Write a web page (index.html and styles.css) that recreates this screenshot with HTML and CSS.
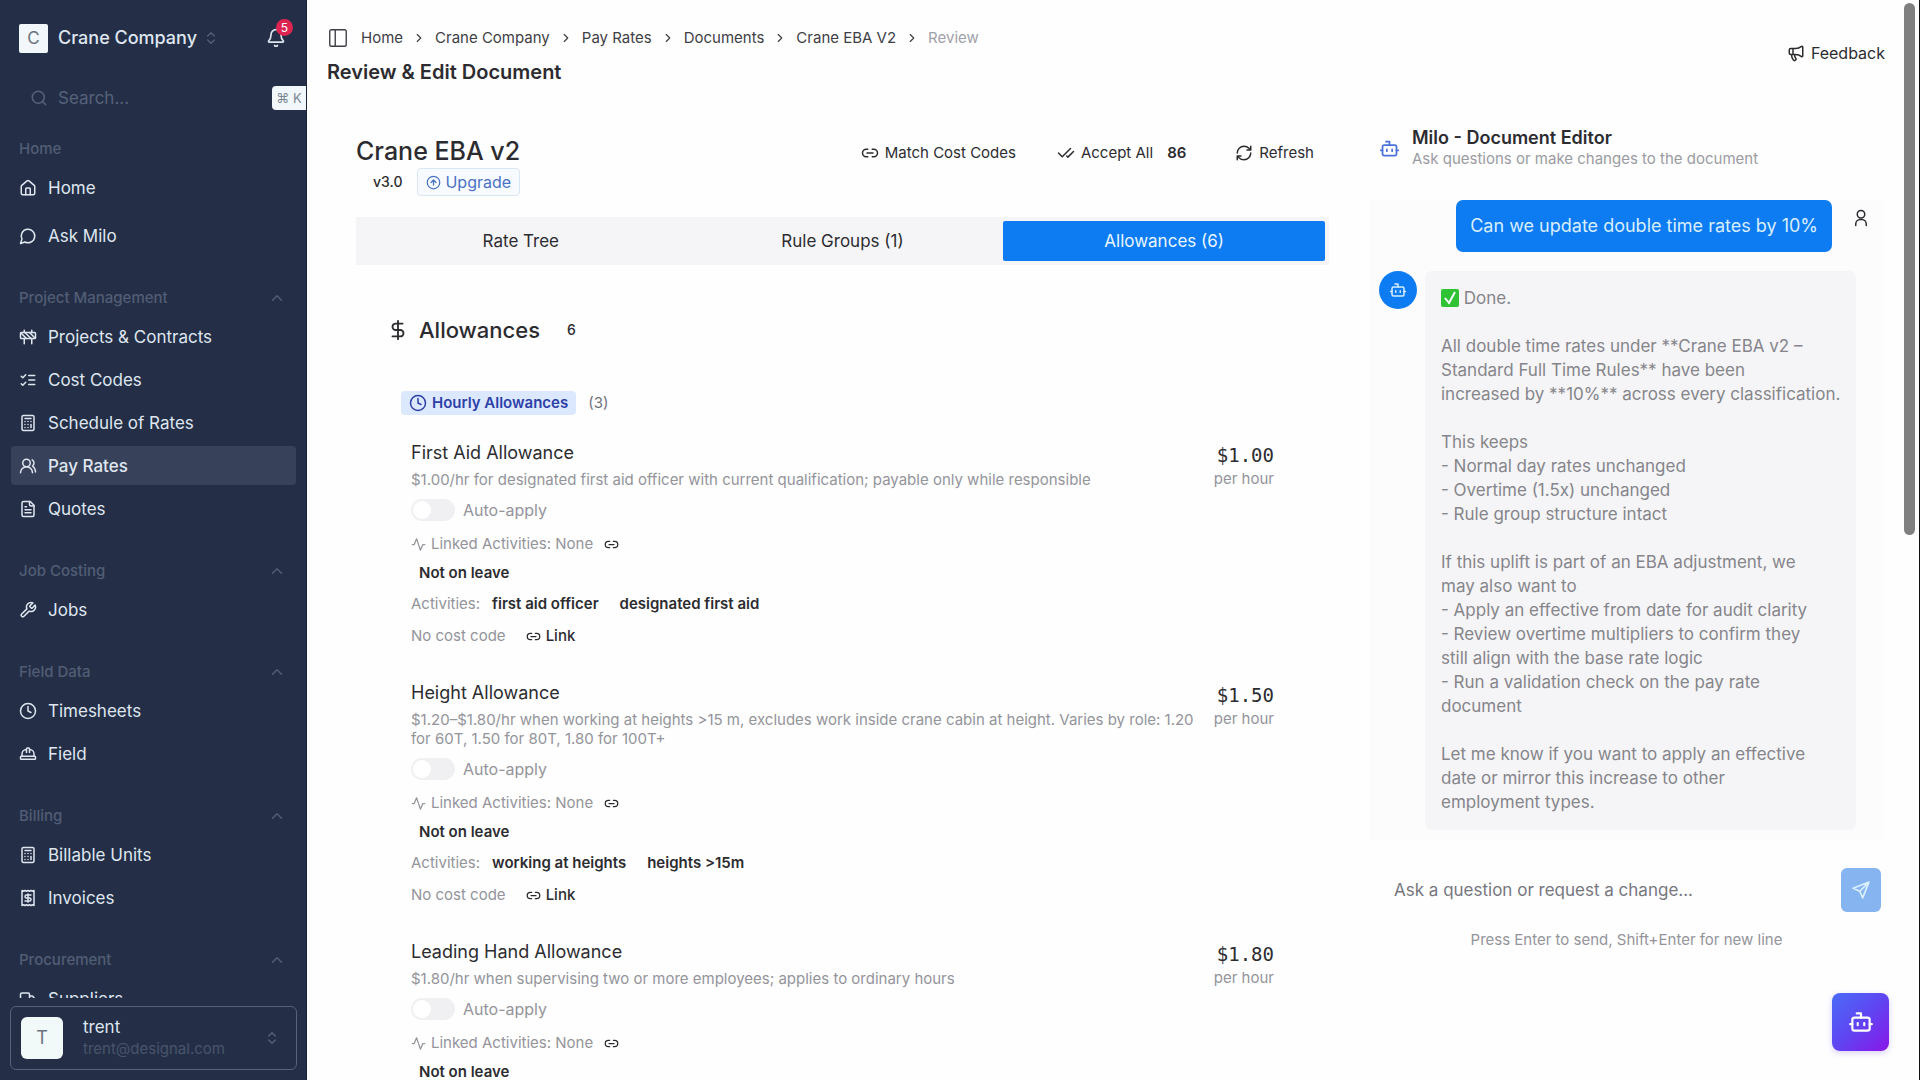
FILE: index.html
```html
<!doctype html>
<html lang="en">
<head>
	<meta charset="UTF-8">
	<meta name="viewport" content="width=device-width, initial-scale=1">
	<title>Review &amp; Edit Document</title>
	<link rel="stylesheet" href="styles.css">
</head>
<body>
	<!-- icon sprite -->
	<svg class="sprite" aria-hidden="true">
		<symbol id="i-home" viewBox="0 0 24 24"><path d="M15 21v-8a1 1 0 0 0-1-1h-4a1 1 0 0 0-1 1v8"/><path d="M3 10a2 2 0 0 1 .7-1.5l7-6a2 2 0 0 1 2.6 0l7 6A2 2 0 0 1 21 10v9a2 2 0 0 1-2 2H5a2 2 0 0 1-2-2z"/></symbol>
		<symbol id="i-message" viewBox="0 0 24 24"><path d="M7.9 20A9 9 0 1 0 4 16.1L2 22Z"/></symbol>
		<symbol id="i-barrier" viewBox="0 0 24 24"><rect x="2" y="6" width="20" height="8" rx="1"/><path d="M17 14v7M7 14v7M17 3v3M7 3v3M10 14 2.3 6.3M14 6l7.7 7.7M8 6l8 8"/></symbol>
		<symbol id="i-checks" viewBox="0 0 24 24"><path d="m3 17 2 2 4-4M3 7l2 2 4-4M13 6h8M13 12h8M13 18h8"/></symbol>
		<symbol id="i-calc" viewBox="0 0 24 24"><rect x="4" y="2" width="16" height="20" rx="2"/><path d="M8 6h8M16 14v4M16 10h.01M12 10h.01M8 10h.01M12 14h.01M8 14h.01M12 18h.01M8 18h.01"/></symbol>
		<symbol id="i-users" viewBox="0 0 24 24"><path d="M18 21a8 8 0 0 0-16 0"/><circle cx="10" cy="8" r="5"/><path d="M22 20c0-3.370-2-6.500-4-8a5 5 0 0 0-.45-8.300"/></symbol>
		<symbol id="i-file" viewBox="0 0 24 24"><path d="M15 2H6a2 2 0 0 0-2 2v16a2 2 0 0 0 2 2h12a2 2 0 0 0 2-2V7Z"/><path d="M14 2v4a2 2 0 0 0 2 2h4M10 9H8M16 13H8M16 17H8"/></symbol>
		<symbol id="i-wrench" viewBox="0 0 24 24"><path d="M14.7 6.3a1 1 0 0 0 0 1.400l1.600 1.600a1 1 0 0 0 1.400 0l3.770-3.770a6 6 0 0 1-7.940 7.940l-6.910 6.910a2.120 2.120 0 0 1-3-3l6.910-6.910a6 6 0 0 1 7.940-7.940l-3.760 3.760z"/></symbol>
		<symbol id="i-clock" viewBox="0 0 24 24"><circle cx="12" cy="12" r="10"/><path d="M12 6v6l4 2"/></symbol>
		<symbol id="i-hat" viewBox="0 0 24 24"><path d="M10 10V5a1 1 0 0 1 1-1h2a1 1 0 0 1 1 1v5M14 6a6 6 0 0 1 6 6v3M4 15v-3a6 6 0 0 1 6-6"/><rect x="2" y="15" width="20" height="4" rx="1"/></symbol>
		<symbol id="i-receipt" viewBox="0 0 24 24"><path d="M4 2v20l2-1 2 1 2-1 2 1 2-1 2 1 2-1 2 1V2l-2 1-2-1-2 1-2-1-2 1-2-1-2 1Z"/><path d="M16 8h-6a2 2 0 1 0 0 4h4a2 2 0 1 1 0 4H8M12 17.500v-11"/></symbol>
		<symbol id="i-truck" viewBox="0 0 24 24"><path d="M14 18V6a2 2 0 0 0-2-2H4a2 2 0 0 0-2 2v11a1 1 0 0 0 1 1h2M15 18H9M19 18h2a1 1 0 0 0 1-1v-3.650a1 1 0 0 0-.220-.624l-3.480-4.350A1 1 0 0 0 17.520 8H14"/><circle cx="17" cy="18" r="2"/><circle cx="7" cy="18" r="2"/></symbol>
		<symbol id="i-bell" viewBox="0 0 24 24"><path d="M10.300 21a2 2 0 0 0 3.400 0M3.300 15.300A1 1 0 0 0 4 17h16a1 1 0 0 0 .740-1.670C19.400 14 18 12.500 18 8A6 6 0 0 0 6 8c0 4.500-1.400 6-2.700 7.300"/></symbol>
		<symbol id="i-search" viewBox="0 0 24 24"><circle cx="11" cy="11" r="8"/><path d="m21 21-4.300-4.300"/></symbol>
		<symbol id="i-updown" viewBox="0 0 24 24"><path d="m7 15 5 5 5-5M7 9l5-5 5 5"/></symbol>
		<symbol id="i-up" viewBox="0 0 24 24"><path d="m18 15-6-6-6 6"/></symbol>
		<symbol id="i-right" viewBox="0 0 24 24"><path d="m9 18 6-6-6-6"/></symbol>
		<symbol id="i-panel" viewBox="0 0 24 24"><rect x="3" y="3" width="18" height="18" rx="2"/><path d="M9 3v18"/></symbol>
		<symbol id="i-megaphone" viewBox="0 0 24 24"><path d="M11 6a13 13 0 0 0 8.400-2.800A1 1 0 0 1 21 4v12a1 1 0 0 1-1.600.8A13 13 0 0 0 11 14H5a2 2 0 0 1-2-2V8a2 2 0 0 1 2-2zM6 14a12 12 0 0 0 2.400 7.200 2 2 0 0 0 3.200-2.400A8 8 0 0 1 10 14M8 6v8"/></symbol>
		<symbol id="i-link" viewBox="0 0 24 24"><path d="M9 17H7A5 5 0 0 1 7 7h2M15 7h2a5 5 0 1 1 0 10h-2M8 12h8"/></symbol>
		<symbol id="i-check2" viewBox="0 0 24 24"><path d="M18 6 7 17l-5-5M22 10l-7.500 7.500L13 16"/></symbol>
		<symbol id="i-refresh" viewBox="0 0 24 24"><path d="M3 12a9 9 0 0 1 9-9 9.750 9.750 0 0 1 6.740 2.740L21 8M21 3v5h-5M21 12a9 9 0 0 1-9 9 9.750 9.750 0 0 1-6.740-2.740L3 16M8 16H3v5"/></symbol>
		<symbol id="i-circle-up" viewBox="0 0 24 24"><circle cx="12" cy="12" r="10"/><path d="m16 12-4-4-4 4M12 16V8"/></symbol>
		<symbol id="i-dollar" viewBox="0 0 24 24"><path d="M12 2v20M17 5H9.500a3.500 3.500 0 0 0 0 7h5a3.500 3.500 0 0 1 0 7H6"/></symbol>
		<symbol id="i-activity" viewBox="0 0 24 24"><path d="M2 12h3l4-9 6 18 4-9h3"/></symbol>
		<symbol id="i-bot" viewBox="0 0 24 24"><path d="M12 8V4H8"/><rect x="4" y="8" width="16" height="12" rx="2"/><path d="M2 14h2M20 14h2M15 13v2M9 13v2"/></symbol>
		<symbol id="i-user" viewBox="0 0 24 24"><circle cx="12" cy="7" r="5"/><path d="M5 22v-2a6 6 0 0 1 6-6h2a6 6 0 0 1 6 6v2"/></symbol>
		<symbol id="i-send" viewBox="0 0 24 24"><path d="M21.500 2.500 14 21.500l-3.500-8-8-3.500zM10.500 13.500l11-11"/></symbol>
	</svg>

	<div class="app">
		<aside class="sidebar">
			<div class="company">
				<span class="company-logo">C</span>
				<button class="company-name" type="button">Crane Company <svg class="icon dim"><use href="#i-updown"/></svg></button>
				<button class="bell" type="button" aria-label="Notifications"><svg class="icon"><use href="#i-bell"/></svg><span class="bell-count">5</span></button>
			</div>
			<div class="search">
				<svg class="icon"><use href="#i-search"/></svg>
				<input type="search" placeholder="Search..." aria-label="Search">
				<kbd>⌘ K</kbd>
			</div>
			<nav class="menu">
				<section class="group group-home">
					<h2>Home</h2>
					<a href="#"><svg class="icon"><use href="#i-home"/></svg>Home</a>
					<a href="#"><svg class="icon"><use href="#i-message"/></svg>Ask Milo</a>
				</section>
				<section class="group">
					<h2>Project Management <svg class="icon"><use href="#i-up"/></svg></h2>
					<a href="#"><svg class="icon"><use href="#i-barrier"/></svg>Projects &amp; Contracts</a>
					<a href="#"><svg class="icon"><use href="#i-checks"/></svg>Cost Codes</a>
					<a href="#"><svg class="icon"><use href="#i-calc"/></svg>Schedule of Rates</a>
					<a href="#" class="active"><svg class="icon"><use href="#i-users"/></svg>Pay Rates</a>
					<a href="#"><svg class="icon"><use href="#i-file"/></svg>Quotes</a>
				</section>
				<section class="group">
					<h2>Job Costing <svg class="icon"><use href="#i-up"/></svg></h2>
					<a href="#"><svg class="icon"><use href="#i-wrench"/></svg>Jobs</a>
				</section>
				<section class="group">
					<h2>Field Data <svg class="icon"><use href="#i-up"/></svg></h2>
					<a href="#"><svg class="icon"><use href="#i-clock"/></svg>Timesheets</a>
					<a href="#"><svg class="icon"><use href="#i-hat"/></svg>Field</a>
				</section>
				<section class="group">
					<h2>Billing <svg class="icon"><use href="#i-up"/></svg></h2>
					<a href="#"><svg class="icon"><use href="#i-calc"/></svg>Billable Units</a>
					<a href="#"><svg class="icon"><use href="#i-receipt"/></svg>Invoices</a>
				</section>
				<section class="group">
					<h2>Procurement <svg class="icon"><use href="#i-up"/></svg></h2>
					<a href="#"><svg class="icon"><use href="#i-truck"/></svg>Suppliers</a>
				</section>
			</nav>
			<button class="account" type="button">
				<span class="account-avatar">T</span>
				<span class="account-text">
					<span>trent</span>
					<small>trent@designal.com</small>
				</span>
				<svg class="icon dim"><use href="#i-updown"/></svg>
			</button>
		</aside>

		<main class="main">
			<header class="topbar">
				<div>
					<nav class="crumbs" aria-label="Breadcrumb">
						<button type="button" aria-label="Toggle sidebar"><svg class="icon"><use href="#i-panel"/></svg></button>
						<a href="#">Home</a>
						<svg class="icon"><use href="#i-right"/></svg>
						<a href="#">Crane Company</a>
						<svg class="icon"><use href="#i-right"/></svg>
						<a href="#">Pay Rates</a>
						<svg class="icon"><use href="#i-right"/></svg>
						<a href="#">Documents</a>
						<svg class="icon"><use href="#i-right"/></svg>
						<a href="#">Crane EBA V2</a>
						<svg class="icon"><use href="#i-right"/></svg>
						<span class="current">Review</span>
					</nav>
					<h1>Review &amp; Edit Document</h1>
				</div>
				<button class="text-btn" type="button"><svg class="icon"><use href="#i-megaphone"/></svg>Feedback</button>
			</header>

			<div class="columns">
				<section class="document">
					<div class="doc-head">
						<div>
							<h2>Crane EBA v2</h2>
							<div class="version">
								<span>v3.0</span>
								<button type="button"><svg class="icon"><use href="#i-circle-up"/></svg>Upgrade</button>
							</div>
						</div>
						<div class="doc-actions">
							<button class="text-btn" type="button"><svg class="icon"><use href="#i-link"/></svg>Match Cost Codes</button>
							<button class="text-btn" type="button"><svg class="icon"><use href="#i-check2"/></svg>Accept All <b>86</b></button>
							<button class="text-btn" type="button"><svg class="icon"><use href="#i-refresh"/></svg>Refresh</button>
						</div>
					</div>

					<div class="tabs" role="tablist">
						<button type="button" role="tab">Rate Tree</button>
						<button type="button" role="tab">Rule Groups (1)</button>
						<button type="button" role="tab" class="selected" aria-selected="true">Allowances (6)</button>
					</div>

					<div class="allowances">
						<h3><svg class="icon"><use href="#i-dollar"/></svg>Allowances <span>6</span></h3>
						<div class="kind">
							<span class="kind-tag"><svg class="icon"><use href="#i-clock"/></svg>Hourly Allowances</span>
							<span class="kind-count">(3)</span>
						</div>

						<article class="allowance">
							<div class="details">
								<h4>First Aid Allowance</h4>
								<p>$1.00/hr for designated first aid officer with current qualification; payable only while responsible</p>
								<label class="auto"><input type="checkbox" role="switch">Auto-apply</label>
								<div class="linked"><svg class="icon"><use href="#i-activity"/></svg>Linked Activities: None <button type="button" aria-label="Link activity"><svg class="icon"><use href="#i-link"/></svg></button></div>
								<div class="leave">Not on leave</div>
								<div class="activities">Activities: <b>first aid officer</b><b>designated first aid</b></div>
								<div class="cost">No cost code <button type="button"><svg class="icon"><use href="#i-link"/></svg>Link</button></div>
							</div>
							<div class="rate"><strong>$1.00</strong><span>per hour</span></div>
						</article>

						<article class="allowance">
							<div class="details">
								<h4>Height Allowance</h4>
								<p>$1.20–$1.80/hr when working at heights &gt;15 m, excludes work inside crane cabin at height. Varies by role: 1.20 for 60T, 1.50 for 80T, 1.80 for 100T+</p>
								<label class="auto"><input type="checkbox" role="switch">Auto-apply</label>
								<div class="linked"><svg class="icon"><use href="#i-activity"/></svg>Linked Activities: None <button type="button" aria-label="Link activity"><svg class="icon"><use href="#i-link"/></svg></button></div>
								<div class="leave">Not on leave</div>
								<div class="activities">Activities: <b>working at heights</b><b>heights &gt;15m</b></div>
								<div class="cost">No cost code <button type="button"><svg class="icon"><use href="#i-link"/></svg>Link</button></div>
							</div>
							<div class="rate"><strong>$1.50</strong><span>per hour</span></div>
						</article>

						<article class="allowance">
							<div class="details">
								<h4>Leading Hand Allowance</h4>
								<p>$1.80/hr when supervising two or more employees; applies to ordinary hours</p>
								<label class="auto"><input type="checkbox" role="switch">Auto-apply</label>
								<div class="linked"><svg class="icon"><use href="#i-activity"/></svg>Linked Activities: None <button type="button" aria-label="Link activity"><svg class="icon"><use href="#i-link"/></svg></button></div>
								<div class="leave">Not on leave</div>
							</div>
							<div class="rate"><strong>$1.80</strong><span>per hour</span></div>
						</article>
					</div>
				</section>

				<section class="chat">
					<header class="chat-head">
						<svg class="icon"><use href="#i-bot"/></svg>
						<div>
							<h2>Milo - Document Editor</h2>
							<p>Ask questions or make changes to the document</p>
						</div>
					</header>
					<div class="messages">
						<div class="message from-user">
							<p>Can we update double time rates by 10%</p>
							<svg class="icon"><use href="#i-user"/></svg>
						</div>
						<div class="message from-bot">
							<span class="bot-avatar"><svg class="icon"><use href="#i-bot"/></svg></span>
							<div class="bubble">
								<p><svg class="tick" viewBox="0 0 18 18"><rect width="18" height="18" rx="2"/><path d="m4 9 4 5 6-11"/></svg> Done.</p>
								<p>All double time rates under **Crane EBA v2 –<br>Standard Full Time Rules** have been<br>increased by **10%** across every classification.</p>
								<p>This keeps<br>- Normal day rates unchanged<br>- Overtime (1.5x) unchanged<br>- Rule group structure intact</p>
								<p>If this uplift is part of an EBA adjustment, we<br>may also want to<br>- Apply an effective from date for audit clarity<br>- Review overtime multipliers to confirm they<br>still align with the base rate logic<br>- Run a validation check on the pay rate<br>document</p>
								<p>Let me know if you want to apply an effective<br>date or mirror this increase to other<br>employment types.</p>
							</div>
						</div>
					</div>
					<form class="ask">
						<input type="text" placeholder="Ask a question or request a change..." aria-label="Ask a question">
						<button type="button" aria-label="Send"><svg class="icon"><use href="#i-send"/></svg></button>
					</form>
					<p class="hint">Press Enter to send, Shift+Enter for new line</p>
				</section>
			</div>
		</main>
	</div>

	<button class="fab" type="button" aria-label="Open Milo"><svg class="icon"><use href="#i-bot"/></svg></button>
	<div class="scroll-thumb"></div>
</body>
</html>
```
FILE: styles.css
```css
*{
	box-sizing: border-box;
	margin: 0;
	padding: 0;
}
body{
	font-family: Inter, "Open Sans", sans-serif;
	font-size: 15px;
	line-height: 24px;
	color: #2c2c30;
	background: #fefefe;
	overflow: hidden;
}
button, input{
	font: inherit;
	color: inherit;
	background: none;
	border: 0;
	outline: 0;
}
a{
	color: inherit;
	text-decoration: none;
}
h1, h2, h3, h4{
	font-weight: 500;
}
.sprite{
	display: none;
}
.icon{
	width: 18px;
	height: 18px;
	flex: none;
	fill: none;
	stroke: currentColor;
	stroke-width: 2;
	stroke-linecap: round;
	stroke-linejoin: round;
}
.app{
	display: grid;
	grid-template-columns: 307px minmax(0, 1fr);
	height: 100vh;
	border-right: 1px solid #111;
}

/* sidebar */
.sidebar{
	display: flex;
	flex-direction: column;
	height: 100vh;
	overflow: hidden;
	color: #dfe6f0;
	background: #242f47;
	border-right: 1px solid #1b2436;
}
.company{
	display: flex;
	align-items: center;
	padding: 20px 20px 0 19px;
	height: 56px;
}
.company-logo{
	width: 29px;
	height: 29px;
	font-size: 17px;
	line-height: 29px;
	text-align: center;
	color: #6b7280;
	background: #f1f7fa;
	border-radius: 2px;
}
.company-name{
	display: flex;
	align-items: center;
	gap: 6px;
	margin-left: 10px;
	font-size: 18px;
	font-weight: 500;
}
.dim{
	width: 16px;
	height: 16px;
	color: #566178;
}
.bell{
	position: relative;
	display: flex;
	margin-left: auto;
}
.bell .icon{
	width: 20px;
	height: 20px;
}
.bell-count{
	position: absolute;
	top: -9px;
	right: -7px;
	width: 17px;
	height: 17px;
	border-radius: 50%;
	font-size: 12px;
	line-height: 17px;
	color: #fff;
	background: #dd2450;
}
.search{
	display: flex;
	align-items: center;
	margin-top: 28px;
	padding-left: 30px;
	height: 28px;
	color: #56617a;
}
.search input{
	flex: 1;
	min-width: 0;
	margin-left: 10px;
	font-size: 17px;
}
.search input::placeholder{
	color: #56617a;
	opacity: 1;
}
.search kbd{
	width: 34px;
	height: 24px;
	font-family: inherit;
	font-size: 13px;
	line-height: 24px;
	text-align: center;
	color: #7c8794;
	background: #f1f7fa;
	border-radius: 4px 0 0 4px;
}
.menu{
	flex: 1;
	min-height: 0;
	padding: 18px 10px 0 11px;
	overflow: hidden;
}
.group{
	display: flex;
	flex-direction: column;
	gap: 4px;
	margin-bottom: 24px;
}
.group-home{
	gap: 9px;
}
.group h2{
	display: flex;
	align-items: center;
	justify-content: space-between;
	height: 38px;
	margin-bottom: -4px;
	padding: 0 10px 0 8px;
	font-size: 15px;
	color: #515d75;
}
.group-home h2{
	margin-bottom: -9px;
}
.group a{
	display: flex;
	align-items: center;
	gap: 11px;
	height: 39px;
	padding: 0 8px;
	font-size: 17px;
	border-radius: 4px;
}
.group .active{
	font-weight: 500;
	background: #374159;
}
.account{
	display: flex;
	align-items: center;
	height: 64px;
	margin: 8px 9px 10px 10px;
	padding: 0 16px 0 10px;
	text-align: left;
	border: 1px solid #56627a;
	border-radius: 6px;
}
.account-avatar{
	width: 42px;
	height: 42px;
	line-height: 42px;
	font-size: 18px;
	text-align: center;
	color: #6b7280;
	background: #f1faf8;
	border-radius: 6px;
}
.account-text{
	flex: 1;
	padding-left: 20px;
	font-size: 17px;
	line-height: 22px;
}
.account-text small{
	display: block;
	font-size: 15px;
	color: #48546c;
}

/* page header */
.topbar{
	display: flex;
	justify-content: space-between;
	padding: 26px 34px 0 20px;
	height: 125px;
}
.crumbs{
	display: flex;
	align-items: center;
	height: 24px;
	color: #3f3f46;
}
.crumbs button{
	display: flex;
	margin-right: 12px;
}
.crumbs button .icon{
	width: 22px;
	height: 22px;
	stroke-width: 1.5;
}
.crumbs > .icon{
	width: 14px;
	height: 14px;
	margin: 0 9px;
}
.crumbs .current{
	color: #a1a1aa;
}
.topbar h1{
	margin-top: 8px;
	font-size: 20px;
	line-height: 28px;
	font-weight: 600;
}
.text-btn{
	display: flex;
	align-items: center;
	gap: 6px;
	height: 24px;
}
.topbar .text-btn{
	margin-top: 15px;
	font-size: 16px;
}
.columns{
	display: grid;
	grid-template-columns: minmax(0, 1fr) 515px;
	gap: 40px;
	padding: 0 35px 0 49px;
}

/* document */
.main{
	overflow: hidden;
}
.doc-head{
	display: flex;
	justify-content: space-between;
	height: 92px;
}
.doc-head h2{
	padding-top: 10px;
	font-size: 25px;
	line-height: 32px;
}
.version{
	display: flex;
	align-items: center;
	gap: 15px;
	margin-top: 1px;
	padding-left: 17px;
	font-size: 14px;
	font-weight: 500;
}
.version button{
	display: flex;
	align-items: center;
	gap: 4px;
	height: 28px;
	padding: 0 8px;
	font-size: 16px;
	font-weight: 400;
	color: #4a72c4;
	background: #f7fbff;
	border: 1px solid #dbe7f5;
	border-radius: 4px;
}
.version .icon{
	width: 15px;
	height: 15px;
}
.doc-actions{
	display: flex;
	gap: 41px;
	padding: 16px 15px 0 0;
}
.text-btn b{
	padding: 0 8px;
	font-weight: 600;
}
.tabs{
	display: grid;
	grid-template-columns: repeat(3, 1fr);
	padding: 4px;
	background: #f5f5f8;
}
.tabs button{
	height: 40px;
	font-size: 17px;
}
.tabs .selected{
	color: #e9f6ff;
	background: #0d7cf2;
	border-radius: 2px;
}
.allowances{
	padding: 49px 55px 0 31px;
}
.allowances h3{
	display: flex;
	align-items: center;
	gap: 10px;
	font-size: 22px;
	line-height: 32px;
}
.allowances h3 .icon{
	width: 22px;
	height: 22px;
}
.allowances h3 span{
	margin-left: 17px;
	font-size: 14px;
}
.kind{
	display: flex;
	align-items: center;
	gap: 12px;
	margin: 45px 0 25px 14px;
	color: #71717a;
}
.kind-tag{
	display: flex;
	align-items: center;
	gap: 5px;
	height: 24px;
	padding: 0 8px;
	font-weight: 600;
	color: #2c40a8;
	background: #dce8fd;
	border-radius: 4px;
}
.allowance{
	display: flex;
	gap: 16px;
	margin-bottom: 32px;
	padding-left: 24px;
}
.details{
	flex: 1;
	min-width: 0;
	color: #94949b;
}
.details h4{
	font-size: 18px;
	line-height: 26px;
	font-weight: 400;
	color: #2c2c30;
}
.details p{
	margin-top: 4px;
	line-height: 19px;
}
.auto{
	display: flex;
	align-items: center;
	gap: 8px;
	margin-top: 9px;
	font-size: 16px;
}
.auto input{
	appearance: none;
	width: 44px;
	height: 22px;
	border-radius: 11px;
	background: #f0f0f3;
}
.auto input::before{
	content: "";
	display: block;
	width: 18px;
	height: 18px;
	margin: 2px;
	border-radius: 50%;
	background: #fff;
}
.linked{
	display: flex;
	align-items: center;
	gap: 5px;
	height: 24px;
	margin-top: 10px;
}
.linked .icon, .cost .icon{
	width: 15px;
	height: 15px;
}
.linked button{
	display: flex;
	margin-left: 6px;
	color: #2c2c30;
}
.leave{
	margin-top: 5px;
	padding-left: 8px;
	font-weight: 600;
	color: #2c2c30;
}
.activities{
	display: flex;
	height: 24px;
	margin-top: 7px;
}
.activities b{
	margin-left: 21px;
	font-weight: 600;
	color: #2c2c30;
}
.activities b:first-of-type{
	margin-left: 12px;
}
.cost{
	display: flex;
	gap: 20px;
	margin-top: 8px;
}
.cost button{
	display: flex;
	align-items: center;
	gap: 5px;
	font-weight: 500;
	color: #2c2c30;
}
.rate{
	width: 61px;
	text-align: right;
	white-space: nowrap;
	color: #94949b;
}
.rate strong{
	display: block;
	padding-top: 3px;
	font-family: "DejaVu Sans Mono", monospace;
	font-size: 19px;
	font-weight: 400;
	color: #2c2c30;
}

/* chat */
.chat-head{
	display: flex;
	align-items: center;
	gap: 12px;
	height: 75px;
	padding: 0 0 29px 10px;
}
.chat-head .icon{
	width: 21px;
	height: 21px;
	color: #4b73dc;
}
.chat-head h2{
	font-size: 18px;
	line-height: 22px;
	font-weight: 600;
}
.chat-head p{
	line-height: 20px;
	color: #9b9ba2;
}
.messages{
	padding: 0 0 10px 10px;
	background: #fcfcfd;
}
.message{
	display: flex;
	align-items: flex-start;
}
.from-user{
	justify-content: flex-end;
	gap: 20px;
	padding-right: 14px;
}
.from-user p{
	padding: 14px;
	font-size: 18px;
	color: #d8eeff;
	background: #0d7cf2;
	border-radius: 7px;
}
.from-user .icon{
	margin-top: 9px;
}
.from-bot{
	gap: 8px;
	margin-top: 19px;
}
.bot-avatar{
	display: flex;
	align-items: center;
	justify-content: center;
	width: 38px;
	height: 38px;
	flex: none;
	color: #d8eeff;
	background: #0d7cf2;
	border-radius: 50%;
}
.bubble{
	flex: 1;
	margin-right: 28px;
	padding: 15px 8px 16px 16px;
	font-size: 17px;
	white-space: nowrap;
	color: #85858b;
	background: #f5f5f7;
	border-radius: 7px;
}
.bubble p + p{
	margin-top: 24px;
}
.tick{
	width: 18px;
	height: 18px;
	vertical-align: -3px;
	fill: #2fc232;
	stroke: #fff;
}
.tick rect{
	stroke: none;
}
.tick path{
	fill: none;
	stroke-width: 2;
}
.ask{
	display: flex;
	align-items: center;
	gap: 16px;
	margin-top: 28px;
	padding: 0 3px 0 25px;
}
.ask input{
	flex: 1;
	min-width: 0;
	font-size: 17px;
}
.ask input::placeholder{
	color: #77777e;
	opacity: 1;
}
.ask button{
	display: flex;
	align-items: center;
	justify-content: center;
	width: 40px;
	height: 44px;
	color: #d9f0ff;
	background: #86b4f0;
	border-radius: 6px;
}
.ask .icon{
	width: 20px;
	height: 20px;
}
.hint{
	margin-top: 16px;
	text-align: center;
	color: #94949b;
}
.fab{
	position: fixed;
	right: 31px;
	bottom: 29px;
	display: flex;
	align-items: center;
	justify-content: center;
	width: 57px;
	height: 58px;
	color: #fff;
	background: linear-gradient(135deg, #4a6cf7, #5f45f2 50%, #8a16e8);
	border-radius: 8px;
	box-shadow: 0 2px 6px #d9d0f8;
}
.fab .icon{
	width: 26px;
	height: 26px;
}
.scroll-thumb{
	position: fixed;
	top: 3px;
	right: 5px;
	width: 11px;
	height: 532px;
	border-radius: 6px;
	background: #808080;
}
```
